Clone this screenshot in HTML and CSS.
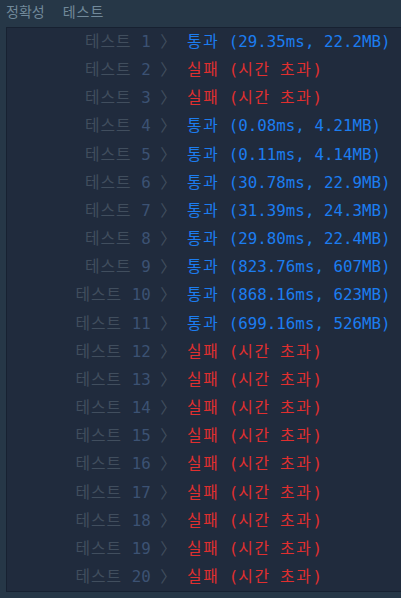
FILE: index.html
```html
<!DOCTYPE html>
<html lang="ko">
<head>
  <meta charset="UTF-8">
  <title>채점 결과</title>
  <link rel="stylesheet" href="styles.css">
</head>
<body>

  <div class="tabs">
    <span>정확성</span>
    <span class="wide">테스트</span>
  </div>

  <div class="result-box">
    <div class="row"><span class="label"><i>테스트</i> <b>1</b> 〉</span><span class="pass"><i>통과</i> (29.35ms, 22.2MB)</span></div>
    <div class="row"><span class="label"><i>테스트</i> <b>2</b> 〉</span><span class="fail"><i>실패</i> (<i>시간</i> <i>초과</i>)</span></div>
    <div class="row"><span class="label"><i>테스트</i> <b>3</b> 〉</span><span class="fail"><i>실패</i> (<i>시간</i> <i>초과</i>)</span></div>
    <div class="row"><span class="label"><i>테스트</i> <b>4</b> 〉</span><span class="pass"><i>통과</i> (0.08ms, 4.21MB)</span></div>
    <div class="row"><span class="label"><i>테스트</i> <b>5</b> 〉</span><span class="pass"><i>통과</i> (0.11ms, 4.14MB)</span></div>
    <div class="row"><span class="label"><i>테스트</i> <b>6</b> 〉</span><span class="pass"><i>통과</i> (30.78ms, 22.9MB)</span></div>
    <div class="row"><span class="label"><i>테스트</i> <b>7</b> 〉</span><span class="pass"><i>통과</i> (31.39ms, 24.3MB)</span></div>
    <div class="row"><span class="label"><i>테스트</i> <b>8</b> 〉</span><span class="pass"><i>통과</i> (29.80ms, 22.4MB)</span></div>
    <div class="row"><span class="label"><i>테스트</i> <b>9</b> 〉</span><span class="pass"><i>통과</i> (823.76ms, 607MB)</span></div>
    <div class="row"><span class="label"><i>테스트</i> <b>10</b> 〉</span><span class="pass"><i>통과</i> (868.16ms, 623MB)</span></div>
    <div class="row"><span class="label"><i>테스트</i> <b>11</b> 〉</span><span class="pass"><i>통과</i> (699.16ms, 526MB)</span></div>
    <div class="row"><span class="label"><i>테스트</i> <b>12</b> 〉</span><span class="fail"><i>실패</i> (<i>시간</i> <i>초과</i>)</span></div>
    <div class="row"><span class="label"><i>테스트</i> <b>13</b> 〉</span><span class="fail"><i>실패</i> (<i>시간</i> <i>초과</i>)</span></div>
    <div class="row"><span class="label"><i>테스트</i> <b>14</b> 〉</span><span class="fail"><i>실패</i> (<i>시간</i> <i>초과</i>)</span></div>
    <div class="row"><span class="label"><i>테스트</i> <b>15</b> 〉</span><span class="fail"><i>실패</i> (<i>시간</i> <i>초과</i>)</span></div>
    <div class="row"><span class="label"><i>테스트</i> <b>16</b> 〉</span><span class="fail"><i>실패</i> (<i>시간</i> <i>초과</i>)</span></div>
    <div class="row"><span class="label"><i>테스트</i> <b>17</b> 〉</span><span class="fail"><i>실패</i> (<i>시간</i> <i>초과</i>)</span></div>
    <div class="row"><span class="label"><i>테스트</i> <b>18</b> 〉</span><span class="fail"><i>실패</i> (<i>시간</i> <i>초과</i>)</span></div>
    <div class="row"><span class="label"><i>테스트</i> <b>19</b> 〉</span><span class="fail"><i>실패</i> (<i>시간</i> <i>초과</i>)</span></div>
    <div class="row"><span class="label"><i>테스트</i> <b>20</b> 〉</span><span class="fail"><i>실패</i> (<i>시간</i> <i>초과</i>)</span></div>
  </div>

</body>
</html>
```

FILE: styles.css
```css
body {
  margin: 0;
  padding: 0;
  background: #263747;
  overflow: hidden;
  font-family: "DejaVu Sans Mono", "Noto Sans CJK KR", monospace;
}
.tabs {
  display: flex;
  gap: 18px;
  height: 27px;
  padding: 0 6px;
  line-height: 23px;
  font-family: "Noto Sans CJK KR", sans-serif;
  font-size: 14px;
  color: #71899a;
}
.tabs .wide {
  letter-spacing: 1px;
}
.result-box {
  margin-left: 6px;
  margin-right: -10px;
  background: #202b3d;
  border: 1px solid #172131;
  font-size: 15.8px;
  line-height: 28.16px;
}
.row {
  display: flex;
  height: 28.16px;
  white-space: pre;
}
.row i {
  font-style: normal;
  letter-spacing: 1.6px;
}
.label {
  width: 169px;
  text-align: right;
  color: #414e5e;
}
.label i {
  letter-spacing: 1px;
}
.label b {
  font-weight: normal;
  color: #3c5273;
}
.pass {
  margin-left: 11px;
  color: #1c7df0;
}
.fail {
  margin-left: 11px;
  color: #e02f2f;
}
```
